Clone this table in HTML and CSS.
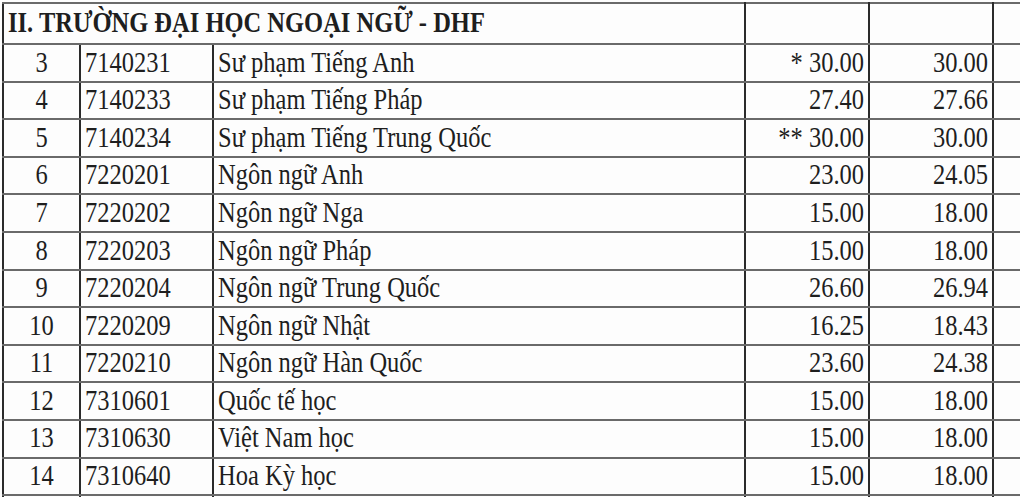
FILE: index.html
```html
<!DOCTYPE html>
<html lang="vi">
<head>
<meta charset="utf-8">
<title>Trường Đại học Ngoại ngữ - DHF</title>
<link rel="stylesheet" href="styles.css">
</head>
<body>
<div class="sheet">
<table class="grid">
  <colgroup>
    <col class="c-stt"><col class="c-code"><col class="c-name"><col class="c-s1"><col class="c-s2"><col class="c-extra">
  </colgroup>
  <tr class="head">
    <td colspan="3" class="title"><span class="t">II. TRƯỜNG ĐẠI HỌC NGOẠI NGỮ - DHF</span></td>
    <td></td><td></td><td></td>
  </tr>
  <tr><td class="stt"><span class="t">3</span></td><td class="code"><span class="t">7140231</span></td><td class="name"><span class="t">Sư phạm Tiếng Anh</span></td><td class="num"><span class="t">* 30.00</span></td><td class="num"><span class="t">30.00</span></td><td></td></tr>
  <tr><td class="stt"><span class="t">4</span></td><td class="code"><span class="t">7140233</span></td><td class="name"><span class="t">Sư phạm Tiếng Pháp</span></td><td class="num"><span class="t">27.40</span></td><td class="num"><span class="t">27.66</span></td><td></td></tr>
  <tr><td class="stt"><span class="t">5</span></td><td class="code"><span class="t">7140234</span></td><td class="name"><span class="t">Sư phạm Tiếng Trung Quốc</span></td><td class="num"><span class="t">** 30.00</span></td><td class="num"><span class="t">30.00</span></td><td></td></tr>
  <tr><td class="stt"><span class="t">6</span></td><td class="code"><span class="t">7220201</span></td><td class="name"><span class="t">Ngôn ngữ Anh</span></td><td class="num"><span class="t">23.00</span></td><td class="num"><span class="t">24.05</span></td><td></td></tr>
  <tr><td class="stt"><span class="t">7</span></td><td class="code"><span class="t">7220202</span></td><td class="name"><span class="t">Ngôn ngữ Nga</span></td><td class="num"><span class="t">15.00</span></td><td class="num"><span class="t">18.00</span></td><td></td></tr>
  <tr><td class="stt"><span class="t">8</span></td><td class="code"><span class="t">7220203</span></td><td class="name"><span class="t">Ngôn ngữ Pháp</span></td><td class="num"><span class="t">15.00</span></td><td class="num"><span class="t">18.00</span></td><td></td></tr>
  <tr><td class="stt"><span class="t">9</span></td><td class="code"><span class="t">7220204</span></td><td class="name"><span class="t">Ngôn ngữ Trung Quốc</span></td><td class="num"><span class="t">26.60</span></td><td class="num"><span class="t">26.94</span></td><td></td></tr>
  <tr><td class="stt"><span class="t">10</span></td><td class="code"><span class="t">7220209</span></td><td class="name"><span class="t">Ngôn ngữ Nhật</span></td><td class="num"><span class="t">16.25</span></td><td class="num"><span class="t">18.43</span></td><td></td></tr>
  <tr><td class="stt"><span class="t">11</span></td><td class="code"><span class="t">7220210</span></td><td class="name"><span class="t">Ngôn ngữ Hàn Quốc</span></td><td class="num"><span class="t">23.60</span></td><td class="num"><span class="t">24.38</span></td><td></td></tr>
  <tr><td class="stt"><span class="t">12</span></td><td class="code"><span class="t">7310601</span></td><td class="name"><span class="t">Quốc tế học</span></td><td class="num"><span class="t">15.00</span></td><td class="num"><span class="t">18.00</span></td><td></td></tr>
  <tr><td class="stt"><span class="t">13</span></td><td class="code"><span class="t">7310630</span></td><td class="name"><span class="t">Việt Nam học</span></td><td class="num"><span class="t">15.00</span></td><td class="num"><span class="t">18.00</span></td><td></td></tr>
  <tr><td class="stt"><span class="t">14</span></td><td class="code"><span class="t">7310640</span></td><td class="name"><span class="t">Hoa Kỳ học</span></td><td class="num"><span class="t">15.00</span></td><td class="num"><span class="t">18.00</span></td><td></td></tr>
  <tr class="tail"><td></td><td></td><td></td><td></td><td></td><td></td></tr>
</table>
</div>
</body>
</html>
```
FILE: styles.css
```css
html, body {
  margin: 0;
  padding: 0;
  background: #fdfdfd;
}
.sheet {
  width: 1020px;
  height: 497px;
  overflow: hidden;
  padding: 2px 0 0 2px;
  box-sizing: border-box;
}
.grid {
  border-collapse: collapse;
  table-layout: fixed;
  width: 1060px;
  font-family: "Liberation Serif", "Times New Roman", serif;
  font-size: 24.5px;
  color: #1e1e1e;
}
.c-stt { width: 77px; }
.c-code { width: 133px; }
.c-name { width: 532px; }
.c-s1 { width: 124px; }
.c-s2 { width: 124px; }
.c-extra { width: 70px; }
.grid td {
  border-top: 2px solid #6a6a6a;
  border-bottom: 2px solid #6a6a6a;
  border-left: 2px solid #2a2a2a;
  border-right: 2px solid #2a2a2a;
  height: 35.6px;
  padding: 0 4px;
  white-space: nowrap;
  vertical-align: middle;
  line-height: 1;
}
.grid tr.head td {
  height: 39px;
}
.grid tr.tail td {
  height: 30px;
}
.t {
  display: inline-block;
  transform: scaleY(1.2);
  position: relative;
  top: -1px;
}
.title {
  font-weight: bold;
  padding-left: 5px;
}
.stt { text-align: center; }
.code { text-align: left; padding-left: 4px; }
.name { text-align: left; padding-left: 4px; }
.num { text-align: right; padding-right: 4px; }
```
